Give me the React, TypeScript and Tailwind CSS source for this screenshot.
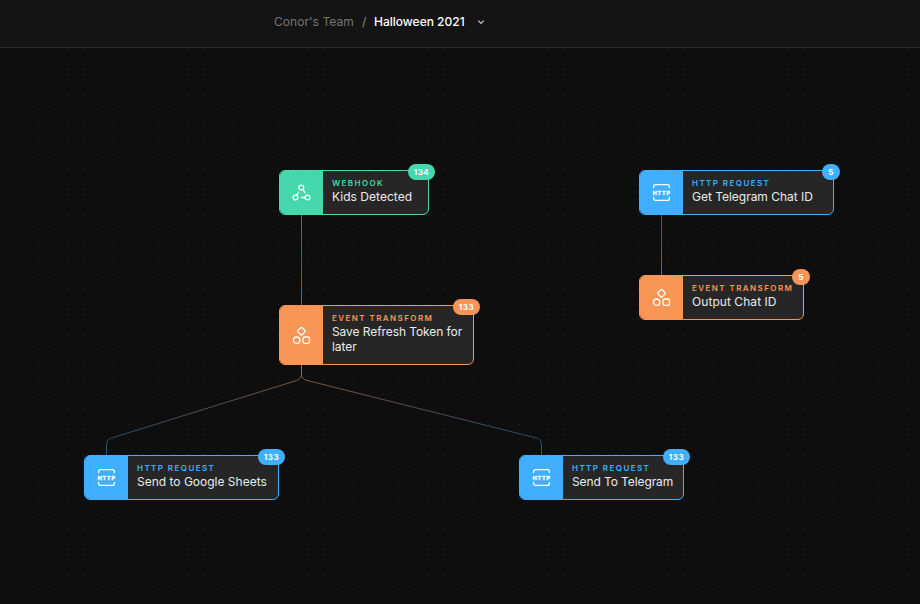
import React from "react";

type Kind = "webhook" | "transform" | "http";

interface FlowNode {
  id: string;
  kind: Kind;
  title: string;
  count: number;
  place: string;
  tracking: string;
}

const nodes: FlowNode[] = [
  { id: "kids", kind: "webhook", title: "Kids Detected", count: 134, place: "left-[279px] top-[122px] w-[150px] h-[45px]", tracking: "tracking-[0.03px]" },
  { id: "save", kind: "transform", title: "Save Refresh Token for later", count: 133, place: "left-[279px] top-[257px] w-[195px] h-[60px]", tracking: "tracking-[-0.08px]" },
  { id: "sheets", kind: "http", title: "Send to Google Sheets", count: 133, place: "left-[84px] top-[407px] w-[195px] h-[45px]", tracking: "tracking-[0px]" },
  { id: "telegram", kind: "http", title: "Send To Telegram", count: 133, place: "left-[519px] top-[407px] w-[165px] h-[45px]", tracking: "tracking-[-0.1px]" },
  { id: "chat", kind: "http", title: "Get Telegram Chat ID", count: 5, place: "left-[639px] top-[122px] w-[195px] h-[45px]", tracking: "tracking-[-0.02px]" },
  { id: "output", kind: "transform", title: "Output Chat ID", count: 5, place: "left-[639px] top-[227px] w-[165px] h-[45px]", tracking: "tracking-[0.06px]" },
];

const kinds = {
  webhook: { label: "WEBHOOK", fill: "bg-[#45d8ac]", border: "border-[#45d8ac]", text: "text-[#45d8ac]" },
  transform: { label: "EVENT TRANSFORM", fill: "bg-[#f99655]", border: "border-[#f99655]", text: "text-[#f99655]" },
  http: { label: "HTTP REQUEST", fill: "bg-[#40afff]", border: "border-[#40afff]", text: "text-[#40afff]" },
};

function KindIcon({ kind }: { kind: Kind }) {
  return (
    <svg width="21" height="21" viewBox="-0.5 -0.5 21 21" fill="none" stroke="white" strokeWidth="1.3" strokeLinecap="round" strokeLinejoin="round">
      {kind === "webhook" && (
        <>
          <circle cx="9.8" cy="5" r="2.4" />
          <circle cx="4" cy="15" r="2.4" />
          <circle cx="16" cy="15" r="2.4" />
          <path d="M11.5 7.2l2.1 3.1M7 9.8l-1.8 2.9M10.2 15h3" />
        </>
      )}
      {kind === "transform" && (
        <>
          <path d="M9.3 2.2a1 1 0 0 1 1.4 0l2.8 2.8a1 1 0 0 1 0 1.4l-2.8 2.8a1 1 0 0 1-1.4 0L6.5 6.4a1 1 0 0 1 0-1.4z" />
          <circle cx="5.2" cy="14.7" r="3.2" />
          <rect x="11.6" y="11.5" width="6.4" height="6.4" rx="1.6" />
        </>
      )}
      {kind === "http" && (
        <>
          <path d="M2.1 5.2V4.1a2 2 0 0 1 2-2h11.8a2 2 0 0 1 2 2v1.1M2.1 14.8v1.1a2 2 0 0 0 2 2h11.8a2 2 0 0 0 2-2v-1.1" />
          <text x="1.3" y="12" fill="white" stroke="white" strokeWidth="0.35" className="font-['Inter',sans-serif] text-[5.4px] font-bold tracking-[0.8px]">HTTP</text>
        </>
      )}
    </svg>
  );
}

function NodeCard({ node }: { node: FlowNode }) {
  const k = kinds[node.kind];
  return (
    <div className={`absolute ${node.place}`}>
      <div className={`flex h-full overflow-hidden rounded-[6px] border bg-[#262626] ${k.border}`}>
        <div className={`flex w-[43px] shrink-0 items-center justify-center ${node.id === "save" ? "pt-px" : ""} ${k.fill}`}>
          <KindIcon kind={node.kind} />
        </div>
        <div className="min-w-0 flex-1 pl-[9px] pt-[7px]">
          <div className={`whitespace-nowrap text-[8px] font-semibold leading-[11px] tracking-[1.43px] ${k.text}`}>{k.label}</div>
          <div className={`text-[12px] leading-[15px] text-[#ebebeb] ${node.tracking}`}>{node.title}</div>
        </div>
      </div>
      <div className={`absolute -right-[6px] -top-[6px] flex h-4 items-center justify-center rounded-full text-[8px] font-bold tracking-[0.5px] text-white ${node.count > 9 ? "w-[27px]" : "w-[18px]"} ${k.fill}`}>
        {node.count}
      </div>
    </div>
  );
}

function Edges() {
  return (
    <svg className="absolute inset-0" width="920" height="556" fill="none" strokeWidth="1">
      <defs>
        <linearGradient id="greenOrange" gradientUnits="userSpaceOnUse" x1="0" y1="167" x2="0" y2="257">
          <stop stopColor="#348069" /><stop offset="0.5" stopColor="#505c50" /><stop offset="1" stopColor="#8d5b3c" />
        </linearGradient>
        <linearGradient id="blueOrange" gradientUnits="userSpaceOnUse" x1="0" y1="167" x2="0" y2="227">
          <stop stopColor="#2f6388" /><stop offset="0.5" stopColor="#55595d" /><stop offset="1" stopColor="#8d5b3c" />
        </linearGradient>
        <linearGradient id="orangeBlue" gradientUnits="userSpaceOnUse" x1="0" y1="317" x2="0" y2="407">
          <stop stopColor="#b27448" /><stop offset="0.2" stopColor="#765442" /><stop offset="0.5" stopColor="#4d5050" /><stop offset="0.8" stopColor="#2d5066" /><stop offset="1" stopColor="#2b5676" />
        </linearGradient>
      </defs>
      <path stroke="url(#greenOrange)" d="M301.5 167V257" />
      <path stroke="url(#blueOrange)" d="M661.5 167V227" />
      <path stroke="url(#orangeBlue)" d="M301.5 317V326Q301.5 331 296.7 332.5L111.5 390Q106.5 391.5 106.5 397V407" />
      <path stroke="url(#orangeBlue)" d="M301.5 317V326Q301.5 331 306.5 332.3L536.5 390Q541.5 391.5 541.5 397V407" />
    </svg>
  );
}

export default function App() {
  return (
    <div className="flex h-[604px] w-[920px] flex-col overflow-hidden bg-[#0e0e0e] font-['Inter','Liberation_Sans',sans-serif]">
      <header className="flex h-12 shrink-0 items-start border-b border-[#2a2a2a] bg-[#141414] pl-[274px] pt-[14px] text-[12px] leading-[16px]">
        <span className="w-[80px] whitespace-nowrap tracking-[0.04px] text-[#757575]">Conor's Team</span>
        <span className="ml-2 w-1 text-[#858585]">/</span>
        <span className="ml-2 w-[92px] whitespace-nowrap font-medium text-white">Halloween 2021</span>
        <svg className="ml-[11px] mt-1" width="8" height="8" viewBox="0 0 8 8" fill="none" stroke="#d0d0d0" strokeWidth="1.1" strokeLinecap="round" strokeLinejoin="round">
          <path d="M1.5 2.8L4 5.3L6.5 2.8" />
        </svg>
      </header>
      <main className="relative flex-1 bg-[linear-gradient(to_right,#0e0e0e_14px,transparent_14px),linear-gradient(to_bottom,#292929_1px,transparent_1px)] bg-[length:15px_15px] bg-[position:9px_1px]">
        <Edges />
        {nodes.map((n) => <NodeCard key={n.id} node={n} />)}
      </main>
    </div>
  );
}
